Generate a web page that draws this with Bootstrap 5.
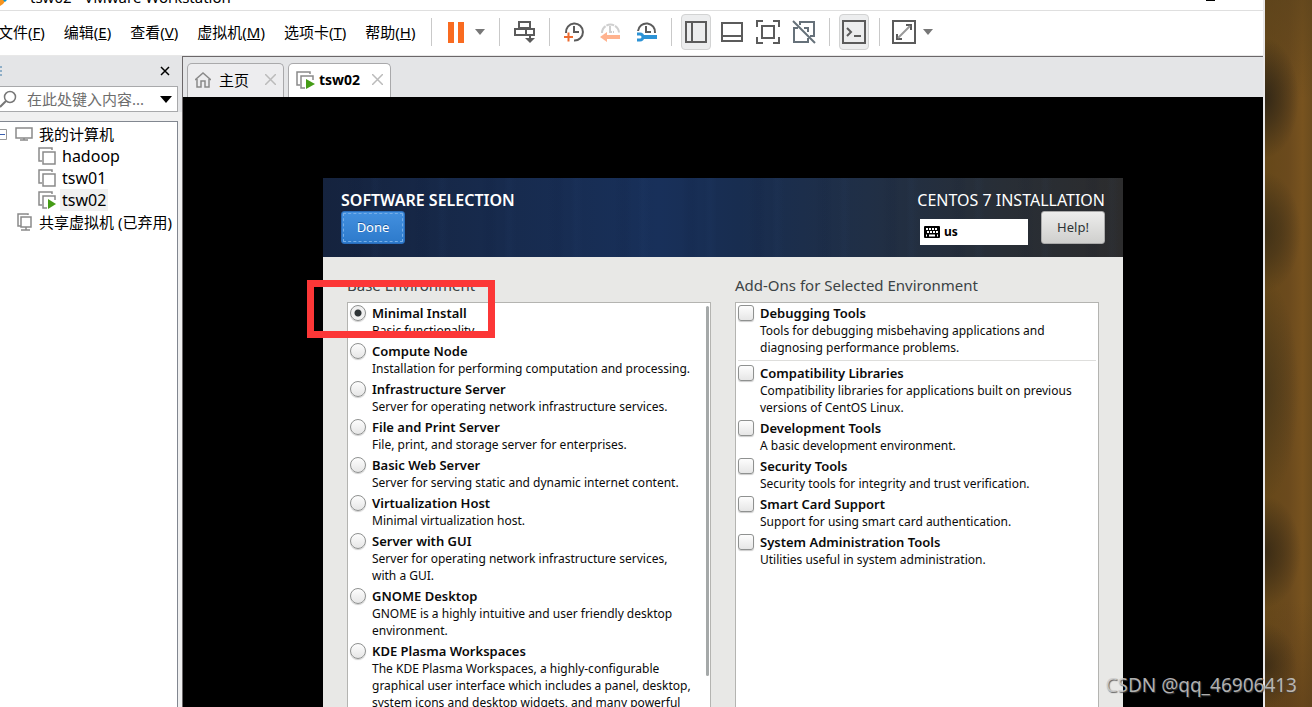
<!DOCTYPE html>
<html lang="zh-CN">
<head>
<meta charset="utf-8">
<meta name="viewport" content="width=device-width, initial-scale=1">
<title>tsw02 - VMware Workstation</title>
<link href="https://cdn.jsdelivr.net/npm/bootstrap@5.3.0/dist/css/bootstrap.min.css" rel="stylesheet">
<style>
  body { font: 15px/22px "Noto Sans", "Noto Sans CJK SC", sans-serif; color: #000; }
  a, a:hover { color: inherit; text-decoration: none; }
  svg { display: block; fill: none; stroke: #5b5b5b; stroke-width: 2; }

  /* window */
  .app-window { background: #fff; border-right: 2px solid #e9e8e9; }
  .title-strip { height: 11px; border-bottom: 1px solid #dfdfdf; padding: 0 48px 2px 30px; }
  .title-strip > * { flex-shrink: 0; }
  .title-logo { left: 0; top: 0; }
  .menu-strip { height: 45px; padding-bottom: 2px; border-bottom: 1px solid #e8e8e8; }
  .menu-links { width: 433px; padding-right: 2px; gap: 19px; margin-left: -2px; }
  .sep { width: 1px; height: 28px; background: #c9c9c9; margin: 0 9px 0 10px; }
  .tool { width: 30px; height: 36px; padding: 0; border: 1px solid transparent; border-radius: 4px; background: none; display: flex; align-items: center; justify-content: center; }
  .tool.pressed { background: #ecedee; border-color: #d2d3d3; }
  .tool.narrow { width: 18px; }
  .tool-group { display: flex; gap: 6px; }

  /* library panel */
  .library { width: 182px; background: #e4e5e7; }
  .library-head { height: 30px; }
  .plain-btn { border: 0; background: none; padding: 0; }
  .search-box { height: 26px; width: 178px; border: 1px solid #a8a9ab; border-left: 0; background: #fff; padding-right: 5px; }
  .search-box input { border: 0; outline: 0; min-width: 0; padding: 0; color: #555; }
  .search-box input::placeholder { color: #6d6d6d; opacity: 1; }
  .library-gap { background: #f0f0f0; padding-top: 9px; }
  .tree { width: 178px; padding-top: 1px; background: #fff; border: solid #828790; border-width: 1px 1px 0 0; white-space: nowrap; }
  .node { height: 22px; gap: 6px; display: flex; align-items: center; padding-left: 15px; }
  .node.child { padding-left: 38px; gap: 4px; font-size: 16px; }
  .node .name { padding: 0 2px; }
  .node .picked { background: #f0f0f0; }
  .node svg, .doc-tab svg { stroke: #8a8a8a; flex-shrink: 0; }
  .expander { left: -4px; top: 7px; }

  /* tabs */
  .work { border: solid #6b6769; border-width: 1px 0 0 1px; background: #000; }
  .tab-strip { height: 40px; background: #e4e5e7; padding-left: 4px; gap: 4px; }
  .doc-tab { height: 34px; border: 1px solid #a9a9ab; border-bottom: 0; border-radius: 5px 5px 0 0; background: #ededef; padding: 0 7px 2px; }
  .doc-tab.current { background: #fff; font-weight: 700; font-size: 14px; }

  /* installer */
  .stage { padding-top: 81px; }
  .installer { width: 800px; background: #e8e8e6; color: #2e3436; }
  .banner { height: 79px; padding: 11px 18px 0; color: #fff; font-size: 16px;
    background:
      repeating-linear-gradient(90deg, transparent 0 23px, rgba(5,15,45,.06) 31px 35px, transparent 41px 47px, rgba(60,100,160,.04) 51px 53px, transparent 59px 67px),
      linear-gradient(90deg, #15233e 0, #172a4c 20%, #18305a 42%, #182d50 52%, #202f46 68%, #282e36 85%, #2c2c2d 100%); }
  .gtk-btn { width: 64px; height: 33px; font-size: 13px; line-height: 20px; padding: 0 0 1px; border-radius: 3px; border: 1px solid #aaa; color: #2e3436; background: linear-gradient(#ededec, #cfcfcd); }
  .gtk-btn.suggested { color: #fff; border-color: #2a6dbb; background: linear-gradient(#4390df, #2d7acb); outline: 1px dashed #77aee8; outline-offset: -3px; text-shadow: 0 -1px #1d5ba2; }
  .layout-box { width: 108px; height: 26px; margin-top: 8px; margin-right: 13px; background: #fff; color: #000; font-size: 12px; padding-left: 4px; gap: 4px; }
  .columns { padding: 17px 24px 0; gap: 24px; }
  .columns > section { flex: 1 1 0; min-width: 0; }
  .columns h2 { font-size: 15px; font-weight: 400; line-height: 22px; margin: 0 0 6px; color: #3c4345; }
  .choices { background: #fff; border: 1px solid #b4b4b1; padding: 2px; height: 500px; color: #0a0a0a; font-size: 12px; line-height: 17px; white-space: nowrap; }
  .choice { display: flex; gap: 6px; padding-bottom: 4px; }
  .choice strong { display: block; font-size: 13px; font-weight: 600; }
  .choice small { display: block; font-size: 12px; }
  .choice input { appearance: none; flex-shrink: 0; width: 16px; height: 16px; margin: 0; border: 1px solid #8f9190; border-radius: 3px; background: linear-gradient(#fdfdfd, #e6e6e6); box-shadow: 0 1px 1px #ccc; }
  .choice input[type=radio] { border-radius: 50%; }
  .choice input[type=radio]:checked { background: radial-gradient(circle, #2e3436 0 3px, #f0f0f0 4px); }
  .choice.ruled { border-bottom: 1px solid #dededc; margin-bottom: 4px; }
  .thumb { right: 1px; top: 3px; width: 3px; height: 370px; border-radius: 2px; background: #a5a9a9; }
  .highlight { left: -16px; top: 102px; width: 188px; height: 58px; border: 7px solid #fc3737; }

  /* desktop */
  .desktop { width: 47px; background:
      radial-gradient(ellipse 34px 60px at 0 98px, rgba(42,34,22,.85), rgba(42,34,22,.5) 45%, transparent),
      radial-gradient(ellipse 36px 60px at 0 232px, rgba(50,40,22,.7), rgba(50,40,22,.45) 45%, transparent),
      radial-gradient(ellipse 34px 110px at 0 390px, rgba(56,46,26,.6), rgba(56,46,26,.35) 45%, transparent),
      radial-gradient(ellipse 36px 56px at 0 552px, rgba(44,34,20,.75), rgba(44,34,20,.45) 45%, transparent),
      radial-gradient(ellipse 32px 42px at 0 665px, rgba(44,34,20,.65), transparent),
      linear-gradient(rgba(90,66,28,.6), transparent 14% 85%, rgba(90,60,24,.6)),
      linear-gradient(90deg, #664819, #6b4a1d 50%, #78531f 80%, #6b4c1e); }
  .watermark { right: 15px; bottom: 9px; font-size: 19px; line-height: 26px; color: rgba(205,205,205,.85); text-shadow: 1px 1px 1px rgba(70,70,70,.8); }
</style>
</head>
<body class="vh-100 overflow-hidden d-flex position-relative">

<div class="app-window d-flex flex-column flex-grow-1 overflow-hidden">
  <header class="title-strip d-flex align-items-end justify-content-between flex-shrink-0 overflow-hidden position-relative">
    <svg class="title-logo position-absolute" width="8" height="7"><path d="M0 0H6L3 4 0 6Z" fill="#f7931e" stroke="none"/><path d="M3 0H7L5 2Z" fill="#0095d3" stroke="none"/></svg>
    <span>tsw02 - VMware Workstation</span>
    <svg width="9" height="8" viewBox="0 0 9 8" aria-hidden="true"><path d="M0 0H9" stroke="#000"/></svg>
  </header>

  <nav class="menu-strip d-flex align-items-center flex-shrink-0">
    <div class="menu-links d-flex flex-shrink-0 text-nowrap">
      <a href="#">文件(<u>F</u>)</a><a href="#">编辑(<u>E</u>)</a><a href="#">查看(<u>V</u>)</a><a href="#">虚拟机(<u>M</u>)</a><a href="#">选项卡(<u>T</u>)</a><a href="#">帮助(<u>H</u>)</a>
    </div>
    <span class="sep ms-0"></span>
    <button class="tool" aria-label="挂起"><svg width="18" height="22"><path d="M4 1V22M14 1V22" stroke="#f96b20" stroke-width="6"/></svg></button>
    <button class="tool narrow" aria-label="电源选项"><svg width="10" height="6"><path d="M0 0H10L5 6Z" fill="#777" stroke="none"/></svg></button>
    <span class="sep"></span>
    <button class="tool" aria-label="发送 Ctrl+Alt+Del"><svg width="24" height="24"><path d="M7 2H18V8H7ZM3 9H22V15H3ZM14 9V15M18 15V20"/><path d="M13 18H23L18 23Z" fill="#5b5b5b" stroke="none"/></svg></button>
    <span class="sep"></span>
    <div class="tool-group">
      <button class="tool" aria-label="拍摄快照"><svg width="24" height="24"><path d="M4 13A8.500 8.500 0 1 1 12 20.500M12 6V12H17"/><path d="M2 17H11M6.500 12.500V21.500" stroke="#ee6b2f"/></svg></button>
      <button class="tool" aria-label="恢复快照"><svg width="24" height="24"><path d="M4 13A8.500 8.500 0 0 1 21 13M12 6V12H16" stroke="#cfcfcf" stroke-dasharray="8 1"/><path d="M22 17H8" stroke="#ffb38f" stroke-width="4"/><path d="M2 17L9 12V22Z" fill="#ffb38f" stroke="none"/></svg></button>
      <button class="tool" aria-label="管理快照"><svg width="24" height="24"><path d="M4 11A8.500 8.500 0 0 1 21 13M12 6V12H17"/><path d="M9 17H23" stroke="#2d93d6" stroke-width="4"/><path d="M3 14H6A3 3 0 0 1 6 20H3" stroke="#2d93d6" stroke-width="3"/></svg></button>
    </div>
    <span class="sep"></span>
    <div class="tool-group">
      <button class="tool pressed" aria-label="显示库"><svg width="22" height="22"><path d="M1 1H21V21H1ZM7 1V21"/></svg></button>
      <button class="tool" aria-label="缩略图栏"><svg width="22" height="22"><path d="M1 2H21V20H1ZM1 15H21"/></svg></button>
      <button class="tool" aria-label="全屏"><svg width="24" height="24"><path d="M1 7V1H7M17 1H23V7M23 17V23H17M7 23H1V17M6 6H18V18H6Z"/></svg></button>
      <button class="tool" aria-label="Unity"><svg width="24" height="24"><path d="M8 5V2H22V16H18M6 8H2V22H16V18M12 8H16V12M1 1L23 23" stroke="#66717a"/></svg></button>
    </div>
    <span class="sep"></span>
    <button class="tool pressed" aria-label="控制台"><svg width="24" height="24"><path d="M1 1H23V23H1ZM5 8L9 12 5 16M12 16H19"/></svg></button>
    <span class="sep"></span>
    <button class="tool" aria-label="拉伸"><svg width="24" height="24"><path d="M1 1H23V23H1Z"/><path d="M14 5H19V10M5 14V19H10"/><path d="M6 18L18 6" stroke="#999"/></svg></button>
    <button class="tool narrow" aria-label="拉伸选项"><svg width="10" height="6"><path d="M0 0H10L5 6Z" fill="#777" stroke="none"/></svg></button>
  </nav>

  <div class="d-flex flex-grow-1 overflow-hidden">
    <aside class="library d-flex flex-column flex-shrink-0">
      <div class="library-head d-flex align-items-center justify-content-end flex-shrink-0 position-relative">
        <svg class="position-absolute start-0" width="2" height="12"><path d="M0 2H2M0 6H2M0 10H2" stroke="#3b78a8" stroke-width="1"/></svg>
        <button class="plain-btn me-2 pe-1" aria-label="关闭"><svg width="10" height="10"><path d="M1 1L9 9M9 1L1 9" stroke="#000" stroke-width="1.500"/></svg></button>
      </div>
      <div class="search-box d-flex align-items-center flex-shrink-0">
        <svg class="flex-shrink-0 me-2" width="19" height="20"><circle cx="10" cy="8" r="5.500" stroke="#777" stroke-width="1.500"/><path d="M6 12L0 18" stroke="#777"/></svg>
        <input class="flex-grow-1" type="text" placeholder="在此处键入内容..." aria-label="搜索">
        <button class="plain-btn" aria-label="筛选"><svg width="12" height="7"><path d="M0 0H12L6 7Z" fill="#000" stroke="none"/></svg></button>
      </div>
      <div class="library-gap flex-grow-1 d-flex">
      <div class="tree position-relative">
        <svg class="expander position-absolute" width="11" height="11"><path d="M.5 .5H10.500V10.500H.5Z" stroke="#999" stroke-width="1"/><path d="M2 5.500H9" stroke="#3b5fb0" stroke-width="1"/></svg>
        <div class="node"><svg width="18" height="14"><path d="M1 1H17V11H1ZM5 13H13M9 11V13" stroke-width="1.500"/></svg><span>我的计算机</span></div>
        <div class="node child"><svg width="18" height="18"><path d="M14 3V1H1V14H4M5 5H17V17H5Z" stroke-width="1.500"/></svg><span class="name">hadoop</span></div>
        <div class="node child"><svg width="18" height="18"><path d="M14 3V1H1V14H4M5 5H17V17H5Z" stroke-width="1.500"/></svg><span class="name">tsw01</span></div>
        <div class="node child"><svg width="18" height="18"><path d="M14 3V1H1V14H4M9 17H5V5H17V9" stroke-width="1.500"/><path d="M10 8L18 13 10 18Z" fill="#459c17" stroke="none"/></svg><span class="name picked">tsw02</span></div>
        <div class="node"><svg width="18" height="18"><path d="M13 2V1H3V13H6M6 4H16V14H6ZM11 14V17M6 17H15" stroke-width="1.500"/></svg><span>共享虚拟机 (已弃用)</span></div>
      </div>
      </div>
    </aside>

    <main class="work flex-grow-1 d-flex flex-column overflow-hidden">
      <div class="tab-strip d-flex align-items-end flex-shrink-0">
        <div class="doc-tab d-flex align-items-center">
          <svg class="me-2" width="16" height="16"><path d="M0 8L8 1 16 8M2 7V15H6V9H10V15H14V7" stroke-width="1.500"/></svg>
          <a href="#" class="me-3">主页</a>
          <button class="plain-btn" aria-label="关闭标签"><svg width="11" height="11"><path d="M0 0L11 11M11 0L0 11" stroke="#bbb" stroke-width="1.500"/></svg></button>
        </div>
        <div class="doc-tab current d-flex align-items-center">
          <svg class="me-1" width="19" height="18"><path d="M14 3V1H1V14H4M9 17H5V5H17V9" stroke-width="1.500"/><path d="M10 8L19 13 10 18Z" fill="#459c17" stroke="none"/></svg>
          <a href="#" class="me-2 pe-1">tsw02</a>
          <button class="plain-btn" aria-label="关闭标签"><svg width="11" height="11"><path d="M0 0L11 11M11 0L0 11" stroke="#bbb" stroke-width="1.500"/></svg></button>
        </div>
      </div>

      <div class="stage d-flex justify-content-center">
        <div class="installer position-relative flex-shrink-0" lang="en">
          <div class="banner d-flex justify-content-between">
            <div><div class="fw-semibold">SOFTWARE SELECTION</div><button class="gtk-btn suggested d-block">Done</button></div>
            <div>
              <div class="text-end">CENTOS 7 INSTALLATION</div>
              <div class="d-flex justify-content-end">
                <div class="layout-box d-flex align-items-center fw-bold"><svg width="16" height="12"><rect width="16" height="12" rx="1" fill="#000" stroke="none"/><path d="M2 3H14M3 6H14" stroke="#fff" stroke-dasharray="2 1"/><path d="M2 9.500H3M5 9.500H11M13 9.500H14" stroke="#fff"/></svg>us</div>
                <button class="gtk-btn">Help!</button>
              </div>
            </div>
          </div>
          <div class="columns d-flex">
            <section>
              <h2>Base Environment</h2>
              <div class="choices position-relative">
                <label class="choice"><input type="radio" name="env" checked><span><strong>Minimal Install</strong><small>Basic functionality.</small></span></label>
                <label class="choice"><input type="radio" name="env"><span><strong>Compute Node</strong><small>Installation for performing computation and processing.</small></span></label>
                <label class="choice"><input type="radio" name="env"><span><strong>Infrastructure Server</strong><small>Server for operating network infrastructure services.</small></span></label>
                <label class="choice"><input type="radio" name="env"><span><strong>File and Print Server</strong><small>File, print, and storage server for enterprises.</small></span></label>
                <label class="choice"><input type="radio" name="env"><span><strong>Basic Web Server</strong><small>Server for serving static and dynamic internet content.</small></span></label>
                <label class="choice"><input type="radio" name="env"><span><strong>Virtualization Host</strong><small>Minimal virtualization host.</small></span></label>
                <label class="choice"><input type="radio" name="env"><span><strong>Server with GUI</strong><small>Server for operating network infrastructure services,<br>with a GUI.</small></span></label>
                <label class="choice"><input type="radio" name="env"><span><strong>GNOME Desktop</strong><small>GNOME is a highly intuitive and user friendly desktop<br>environment.</small></span></label>
                <label class="choice"><input type="radio" name="env"><span><strong>KDE Plasma Workspaces</strong><small>The KDE Plasma Workspaces, a highly-configurable<br>graphical user interface which includes a panel, desktop,<br>system icons and desktop widgets, and many powerful</small></span></label>
                <span class="thumb position-absolute"></span>
              </div>
            </section>
            <section>
              <h2>Add-Ons for Selected Environment</h2>
              <div class="choices">
                <label class="choice ruled"><input type="checkbox"><span><strong>Debugging Tools</strong><small>Tools for debugging misbehaving applications and<br>diagnosing performance problems.</small></span></label>
                <label class="choice"><input type="checkbox"><span><strong>Compatibility Libraries</strong><small>Compatibility libraries for applications built on previous<br>versions of CentOS Linux.</small></span></label>
                <label class="choice"><input type="checkbox"><span><strong>Development Tools</strong><small>A basic development environment.</small></span></label>
                <label class="choice"><input type="checkbox"><span><strong>Security Tools</strong><small>Security tools for integrity and trust verification.</small></span></label>
                <label class="choice"><input type="checkbox"><span><strong>Smart Card Support</strong><small>Support for using smart card authentication.</small></span></label>
                <label class="choice"><input type="checkbox"><span><strong>System Administration Tools</strong><small>Utilities useful in system administration.</small></span></label>
              </div>
            </section>
          </div>
          <div class="highlight position-absolute"></div>
        </div>
      </div>
    </main>
  </div>
</div>

<div class="desktop flex-shrink-0"></div>
<div class="watermark position-absolute">CSDN @qq_46906413</div>

<script src="https://cdn.jsdelivr.net/npm/bootstrap@5.3.0/dist/js/bootstrap.bundle.min.js"></script>
</body>
</html>
